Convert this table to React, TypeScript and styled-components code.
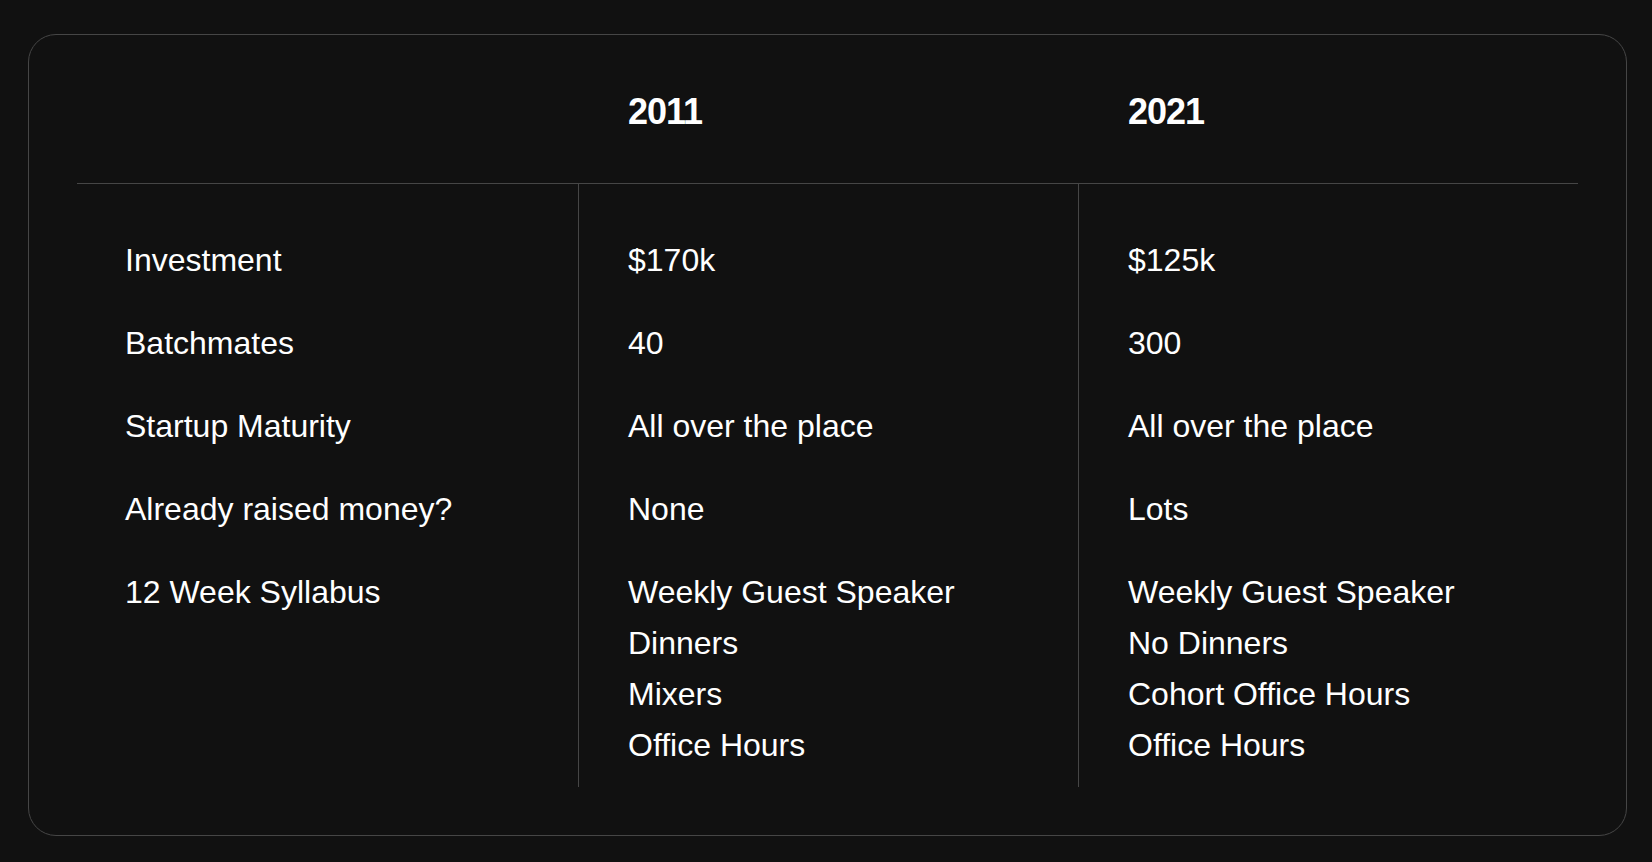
import styled, { createGlobalStyle } from 'styled-components';

interface Row {
  label: string;
  then: string[];
  now: string[];
}

const rows: Row[] = [
  { label: 'Investment', then: ['$170k'], now: ['$125k'] },
  { label: 'Batchmates', then: ['40'], now: ['300'] },
  { label: 'Startup Maturity', then: ['All over the place'], now: ['All over the place'] },
  { label: 'Already raised money?', then: ['None'], now: ['Lots'] },
  {
    label: '12 Week Syllabus',
    then: ['Weekly Guest Speaker', 'Dinners', 'Mixers', 'Office Hours'],
    now: ['Weekly Guest Speaker', 'No Dinners', 'Cohort Office Hours', 'Office Hours'],
  },
];

const App: React.FC = () => {
  return (
    <>
      <GlobalStyle />
      <Card>
        <HeaderRow>
          <HeaderCell />
          <HeaderCell $divider>2011</HeaderCell>
          <HeaderCell $divider>2021</HeaderCell>
        </HeaderRow>
        <Body>
          <Column>
            {rows.map((row) => (
              <Cell key={row.label}>
                <Line>{row.label}</Line>
              </Cell>
            ))}
          </Column>
          <Column $divider>
            {rows.map((row) => (
              <Cell key={row.label}>
                {row.then.map((text) => (
                  <Line key={text}>{text}</Line>
                ))}
              </Cell>
            ))}
          </Column>
          <Column $divider>
            {rows.map((row) => (
              <Cell key={row.label}>
                {row.now.map((text) => (
                  <Line key={text}>{text}</Line>
                ))}
              </Cell>
            ))}
          </Column>
        </Body>
      </Card>
    </>
  );
};

const GlobalStyle = createGlobalStyle`
  html, body {
    margin: 0;
    background: #111111;
    font-family: 'Liberation Sans', Arial, sans-serif;
    color: #ffffff;
  }
`;

const Card = styled.div`
  box-sizing: border-box;
  width: 1599px;
  height: 802px;
  margin: 34px 0 0 28px;
  padding: 0 48px;
  border: 1px solid #464646;
  border-radius: 28px;
  background: #111111;
`;

const HeaderRow = styled.div`
  display: grid;
  grid-template-columns: 501px 500px 1fr;
  height: 148px;
  align-items: center;
  border-bottom: 1px solid #464646;
`;

const HeaderCell = styled.div<{ $divider?: boolean }>`
  padding: 6px 0 0 ${({ $divider }) => ($divider ? '50px' : '48px')};
  font-size: 36px;
  font-weight: 700;
  letter-spacing: -1px;
`;

const Body = styled.div`
  display: grid;
  grid-template-columns: 501px 500px 1fr;
`;

const Column = styled.div<{ $divider?: boolean }>`
  display: flex;
  flex-direction: column;
  gap: 32px;
  padding: 51px 0 16px ${({ $divider }) => ($divider ? '49px' : '48px')};
  border-left: ${({ $divider }) => ($divider ? '1px solid #464646' : 'none')};
`;

const Cell = styled.div`
  display: flex;
  flex-direction: column;
`;

const Line = styled.div`
  font-size: 32px;
  line-height: 51px;
  white-space: nowrap;
`;

export default App;
